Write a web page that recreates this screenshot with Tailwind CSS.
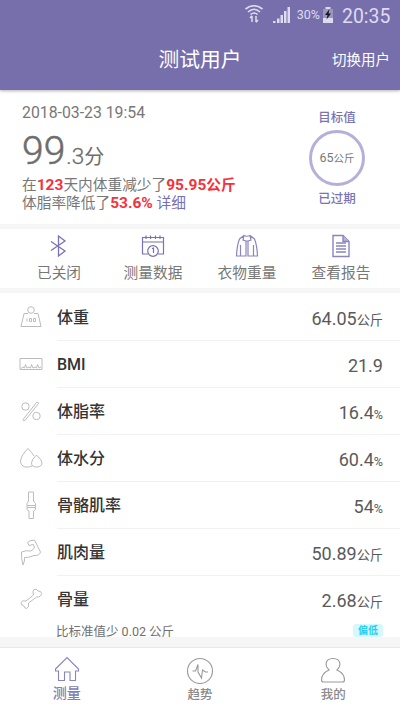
<!DOCTYPE html>
<html lang="zh">
<head>
<meta charset="utf-8">
<script src="https://cdn.jsdelivr.net/npm/@tailwindcss/browser@4"></script>
</head>
<body class="w-[400px] h-[711px] overflow-hidden bg-white text-[#777] font-[Roboto,'Noto_Sans_CJK_SC',sans-serif]">
<div class="w-[400px] h-[711px] flex flex-col whitespace-nowrap">
  <header class="relative z-10 h-[90px] shrink-0 bg-[#766fab] text-white shadow-[0_1px_3px_rgba(0,0,0,0.3)]">
    <div class="h-[30px] flex items-center justify-end pr-[10px] text-[#dedbf0]">
      <svg class="w-[20px] h-[20px] mr-[9px]" viewBox="0 0 20 20" fill="none" stroke="currentColor" stroke-width="1.6"><path d="M1.500 4Q10-2.500 18.500 4M4 7Q10 1.500 16 7M6.500 9.500Q10 6.500 13.500 9.500"/><path d="M8 17V11M6 13L8 10.800M12 11V17M14 15L12 17.200" stroke-width="1.500"/></svg>
      <svg class="w-[18px] h-[18px] mr-[6px]" viewBox="0 0 18 18" fill="currentColor"><path d="M0 15h2.500v2H0zM4 12.500h2.500V17H4zM7.500 9H10v8H7.500zM11 5h2.500v12H11zM14.500 1H17v16h-2.500z"/></svg>
      <span class="text-[12.500px] mr-[2px] leading-[30px]">30%</span>
      <svg class="w-[12px] h-[18px] mr-[8px]" viewBox="0 0 12 18"><path d="M3.500 1h5v2H11v14H1V3h2.500z" fill="#dedbf0"/><path d="M1 3h10v9H1z" fill="#9b97b9"/><path d="M7.500 3L3 9h2.500L4.500 13.500 9 7.500H6.500z" fill="#171529"/></svg>
      <span class="text-[20px] leading-[30px] w-[48px] pt-px"><span class="inline-block origin-left scale-x-[0.97]">20:35</span></span>
    </div>
    <div class="h-[60px] grid grid-cols-[1fr_90px_1fr] items-center">
      <span></span>
      <h1 class="text-[20.800px] leading-[28px] text-center">测试用户</h1>
      <span class="text-[14.500px] leading-[20px] text-right pr-[10px] pt-[2px]">切换用户</span>
    </div>
  </header>

  <section class="h-[134px] shrink-0 flex justify-between pl-[22px] pr-[34px]">
    <div class="pt-[12px]">
      <p class="text-[15.800px] leading-[21px]">2018-03-23 19:54</p>
      <p class="flex items-baseline h-[50px] leading-[50px] pt-[3px] text-[#6d6d6d]"><span class="text-[39px] font-light [-webkit-text-stroke:0.5px_#6d6d6d]">99</span><span class="text-[22.500px] font-light ml-px [-webkit-text-stroke:0.3px_#6d6d6d]">.3</span><span class="text-[20px]">分</span></p>
      <p class="text-[14.700px] leading-[18px] pt-[3px]">在<b class="text-[#f5323a] text-[15.500px]">123</b>天内体重减少了<b class="text-[#f5323a] text-[15.500px]">95.95</b><b class="text-[#f5323a]">公斤</b></p>
      <p class="text-[14.700px] leading-[18px]">体脂率降低了<b class="text-[#f5323a] text-[15.500px]">53.6%</b> <span class="text-[#7570b5]">详细</span></p>
    </div>
    <div class="w-[58px] flex flex-col items-center pt-[19px] text-[#7974b4]">
      <span class="text-[12.500px] leading-[18px] font-medium">目标值</span>
      <div class="w-[56px] h-[56px] rounded-full border-[3px] border-[#b5b0d8] mt-[3px] flex items-center justify-center text-[#777] text-[12.500px]"><span>65<span class="text-[10.500px]">公斤</span></span></div>
      <span class="text-[12.500px] leading-[18px] font-medium mt-[4px]">已过期</span>
    </div>
  </section>

  <div class="h-[5px] shrink-0 bg-[#f6f6f6]"></div>
  <nav class="h-[59px] shrink-0 grid grid-cols-4 px-[12px] pt-[5px] text-[14.700px] leading-[20px]">
    <div class="flex flex-col items-center gap-[5px]">
      <svg class="w-[24px] h-[24px]" viewBox="0 0 24 24" fill="none" stroke="#7772b4" stroke-width="1.300"><path d="M4 7.500L18 17 11.500 22V2L18 7 4 16.500"/></svg><span>已关闭</span></div>
    <div class="flex flex-col items-center gap-[5px]">
      <svg class="w-[24px] h-[24px]" viewBox="0 0 24 24" fill="none" stroke="#7772b4" stroke-width="1.200"><path d="M7 20H1.500V3.500h21V20H17M1.500 8h21M5 1.500V5M9.500 1.500V5M14.500 1.500V5M19 1.500V5"/><circle cx="12" cy="17" r="5.300"/><path d="M11 14.500l1.500-.5v5"/></svg><span>测量数据</span></div>
    <div class="flex flex-col items-center gap-[5px]">
      <svg class="w-[24px] h-[24px]" viewBox="0 0 24 24" fill="none" stroke="#8a85bf" stroke-width="1.200"><path d="M9 1.500Q12 3 15 1.500L19.500 5Q22 11 22.500 22H18.500V11V22H13V7H11V22H5.500V11V22H1.500Q2 11 4.500 5ZM9 1.500L8 6 11 7M15 1.500L16 6 13 7"/></svg><span>衣物重量</span></div>
    <div class="flex flex-col items-center gap-[5px]">
      <svg class="w-[24px] h-[24px]" viewBox="0 0 24 24" fill="none" stroke="#8a85bf" stroke-width="1.400"><path d="M4 1.500H14L20 7.500V22.500H4Z"/><path d="M14 1.500V7.500H20" fill="#b7b3da"/><path d="M7 9H17M7 12H17M7 15H17M7 18H17" stroke-width="1.500"/></svg><span>查看报告</span></div>
  </nav>
  <div class="h-[5px] shrink-0 bg-[#f6f6f6]"></div>

  <main class="h-[344px] shrink-0 pt-px text-[#5a5a5a]">
    <div class="h-[47px] flex items-center pl-[19px]">
      <svg class="w-[24px] h-[24px] mr-[14px]" viewBox="0 0 24 24" fill="none" stroke="#bcbcbc"><circle cx="12" cy="4" r="3.300"/><path d="M9 7.500H5L2 20.500H22L19 7.500H15M8 12.500V15.500M10.500 12.500h2v3h-2zM14.500 12.500h2v3h-2z"/></svg>
      <div class="flex-1 h-full border-b border-[#f1f1f1] flex items-center justify-between pr-[17px] pt-[2px]"><span class="text-[16px] font-medium text-[#333]">体重</span><span class="text-[18px]">64.05<span class="text-[13.200px]">公斤</span></span></div>
    </div>
    <div class="h-[47px] flex items-center pl-[19px]">
      <svg class="w-[24px] h-[24px] mr-[14px]" viewBox="0 0 24 24" fill="none" stroke="#bcbcbc"><path d="M1 5.500H23V16.500H1Z"/><path d="M2 15.500L4 14 5.500 15 6.500 11.500 8 15 10 14 11.500 15 12.500 11.500 14 15 16 14 17.500 15 18.500 11.500 20 15 22 14"/></svg>
      <div class="flex-1 h-full border-b border-[#f1f1f1] flex items-center justify-between pr-[17px] pt-[2px]"><span class="text-[16px] font-medium text-[#333]">BMI</span><span class="text-[18px]">21.9</span></div>
    </div>
    <div class="h-[47px] flex items-center pl-[19px]">
      <svg class="w-[24px] h-[24px] mr-[14px]" viewBox="0 0 24 24" fill="none" stroke="#bcbcbc"><circle cx="6.500" cy="6.500" r="3.700"/><circle cx="17.500" cy="16" r="3.700"/><path d="M17.500 2.500L4 19.500Q4 21.500 6 20.500L19.500 3.500Q19.500 1.500 17.500 2.500Z"/></svg>
      <div class="flex-1 h-full border-b border-[#f1f1f1] flex items-center justify-between pr-[17px] pt-[2px]"><span class="text-[16px] font-medium text-[#333]">体脂率</span><span class="text-[18px]">16.4<span class="text-[12.500px]">%</span></span></div>
    </div>
    <div class="h-[47px] flex items-center pl-[19px]">
      <svg class="w-[24px] h-[24px] mr-[14px]" viewBox="0 0 24 24" fill="none" stroke="#bcbcbc"><path d="M13 19Q10 20.500 6 20Q1.500 18.500 1.500 14Q2 8.500 9 1.500Q13 5.500 15 9"/><path d="M17.500 8Q23 13 23 16Q22.500 20 17.500 20Q12.500 20 12.500 16Q12.500 12.500 17.500 8Z"/></svg>
      <div class="flex-1 h-full border-b border-[#f1f1f1] flex items-center justify-between pr-[17px] pt-[2px]"><span class="text-[16px] font-medium text-[#333]">体水分</span><span class="text-[18px]">60.4<span class="text-[12.500px]">%</span></span></div>
    </div>
    <div class="h-[47px] flex items-center pl-[19px]">
      <svg class="w-[24px] h-[30px] mr-[14px]" viewBox="0 0 24 30" fill="none" stroke="#bcbcbc"><path d="M9.500 1H14.500V10L16.500 12.500V14.500H8V12.500L9.500 10ZM8 16.500H16.500V18.500L14.500 20V27.500H10V20L8 18.500ZM8 14.500V16.500M16.500 14.500V16.500"/></svg>
      <div class="flex-1 h-full border-b border-[#f1f1f1] flex items-center justify-between pr-[17px] pt-[2px]"><span class="text-[16px] font-medium text-[#333]">骨骼肌率</span><span class="text-[18px]">54<span class="text-[12.500px]">%</span></span></div>
    </div>
    <div class="h-[47px] flex items-center pl-[19px]">
      <svg class="w-[24px] h-[28px] mr-[14px]" viewBox="0 0 24 28" fill="none" stroke="#bcbcbc"><path d="M4 26Q2 19.500 2.500 13Q7 11 12 12L15.500 9L14.500 5.500L10 6.500L8.500 3.500Q11 .8 15.500 1.200L21.500 13Q20.500 17 15 16.500Q9 19 5.500 18.500Q6 22 4 26Z"/></svg>
      <div class="flex-1 h-full border-b border-[#f1f1f1] flex items-center justify-between pr-[17px] pt-[2px]"><span class="text-[16px] font-medium text-[#333]">肌肉量</span><span class="text-[18px]">50.89<span class="text-[13.200px]">公斤</span></span></div>
    </div>
    <div class="h-[46px] flex items-center pl-[19px]">
      <svg class="w-[24px] h-[24px] mr-[14px]" viewBox="0 0 24 24" fill="none" stroke="#bcbcbc"><path d="M14.500 8Q13 4 15 2.500Q17.500 1 19 4Q22.500 4 22.500 6.500Q22 10.500 17.500 10L9.500 16Q10.500 20.500 7.500 21.500Q5.500 21.500 5 19Q1.500 18 2 15.500Q3 13 7 14Z"/></svg>
      <div class="flex-1 h-full flex items-center justify-between pr-[17px] pt-[2px]"><span class="text-[16px] font-medium text-[#333]">骨量</span><span class="text-[18px]">2.68<span class="text-[13.200px]">公斤</span></span></div>
    </div>
    <div class="h-[15px] flex items-center justify-between pl-[56px] pr-[17px] text-[12.500px] leading-[15px]"><span class="mt-[3px] text-[#707070]">比标准值少 0.02 公斤</span><span class="mt-[2px] w-[30px] h-[13px] rounded-[3px] bg-[#d5f8ff] text-[#2acdf0] text-[10px] leading-[13px] font-bold text-center">偏低</span></div>
  </main>
  <div class="h-[11px] shrink-0 bg-[#f6f6f6] border-b border-[#e9e9e9]"></div>

  <footer class="flex-1 grid grid-cols-3 pt-[8px] text-[12.500px] leading-[18px] font-medium text-[#8a8a8a]">
    <div class="flex flex-col items-center text-[#817cba] text-[14px]">
      <svg class="w-[26px] h-[28px]" viewBox="0 0 26 28" fill="none" stroke="#8883c2" stroke-width="1.100"><path d="M1.500 13L13 1.500 24.500 13V15H21.500V24.500H16V16H10.500V24.500H4.500V15H1.500Z"/></svg><span>测量</span></div>
    <div class="flex flex-col items-center">
      <svg class="w-[28px] h-[28px] mb-[2px]" viewBox="0 0 28 28" fill="none" stroke="#999" stroke-width="1.100"><circle cx="14" cy="15" r="12.500"/><path d="M6.500 15H9.500L12 8.500V16L15.500 22 16.500 14 19.500 16H22"/></svg><span>趋势</span></div>
    <div class="flex flex-col items-center">
      <svg class="w-[28px] h-[28px] mb-[2px]" viewBox="0 0 28 28" fill="none" stroke="#999" stroke-width="1.100"><path d="M10 14Q7 11 7 8Q7.500 2.500 14 2.500Q20.500 2.500 21 8Q21 11 18 14Q25.500 17.500 25.500 24Q25.500 26 23.500 26H4.500Q2.500 26 2.500 24Q2.500 17.500 10 14Z"/></svg><span>我的</span></div>
  </footer>
</div>
</body>
</html>
